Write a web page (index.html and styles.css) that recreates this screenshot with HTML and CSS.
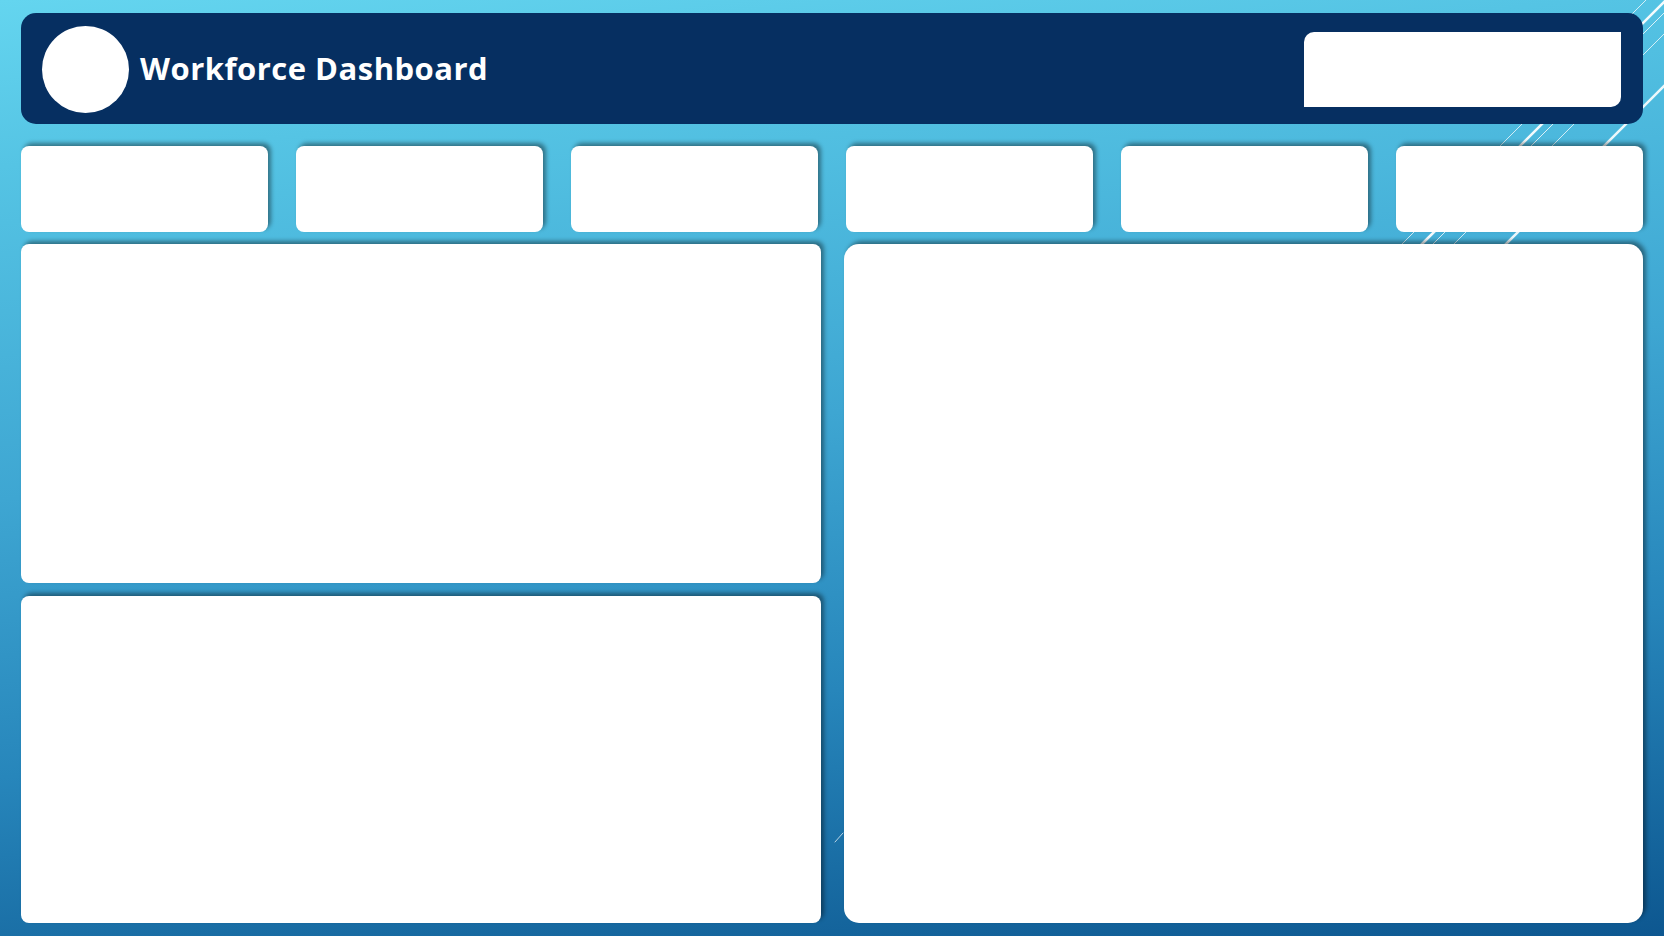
FILE: index.html
```html
<!DOCTYPE html>
<html lang="en">
  <head>
    <meta charset="UTF-8" />
    <meta name="viewport" content="width=device-width,initial-scale=1.0" />
    <title>Workforce Dashboard</title>
    <link rel="stylesheet" href="styles.css">
  </head>
  <body>
    <svg class="streaks" width="1664" height="936" viewBox="0 0 1664 936">
      <g stroke="#ffffff" stroke-linecap="round">
        <line x1="1646" y1="0" x2="1396" y2="250" stroke-width="1" opacity="0.75" />
        <line x1="1666" y1="0" x2="1416" y2="250" stroke-width="2.5" opacity="0.95" />
        <line x1="1677" y1="0" x2="1427" y2="250" stroke-width="1" opacity="0.8" />
        <line x1="1698" y1="0" x2="1448" y2="250" stroke-width="1" opacity="0.75" />
        <line x1="1750" y1="0" x2="1500" y2="250" stroke-width="2.5" opacity="0.9" />
        <line x1="835" y1="842" x2="843" y2="833" stroke-width="1" opacity="0.7" />
      </g>
    </svg>

    <div class="dashboard">
      <header class="topbar">
        <div class="logo"></div>
        <h1 class="title">Workforce Dashboard</h1>
        <div class="slicer"></div>
      </header>

      <section class="kpis">
        <div class="kpi"></div>
        <div class="kpi"></div>
        <div class="kpi"></div>
        <div class="kpi"></div>
        <div class="kpi"></div>
        <div class="kpi"></div>
      </section>

      <section class="main">
        <div class="left-col">
          <div class="panel panel-top"></div>
          <div class="panel panel-bottom"></div>
        </div>
        <div class="panel panel-big"></div>
      </section>
    </div>
  </body>
</html>
```

FILE: styles.css
```css
* {
  padding: 0;
  margin: 0;
  box-sizing: border-box;
  font-family: 'Open Sans', 'Liberation Sans', sans-serif;
}
body {
  width: 1664px;
  height: 936px;
  overflow: hidden;
  position: relative;
  background: linear-gradient(174deg, #64d5ef 0%, #55c4e4 15%, #3ea6d2 45%, #2786bb 70%, #0d5790 100%);
}
.streaks {
  position: absolute;
  top: 0;
  left: 0;
  pointer-events: none;
}
.dashboard {
  position: relative;
  height: 936px;
  padding: 13px 21px;
  display: flex;
  flex-direction: column;
}
.topbar {
  height: 111px;
  flex-shrink: 0;
  background-color: #062f61;
  border-radius: 15px;
  display: flex;
  align-items: center;
  padding: 0 22px 0 21px;
  margin-bottom: 22px;
}
.logo {
  width: 87px;
  height: 87px;
  flex-shrink: 0;
  border-radius: 50%;
  background-color: #ffffff;
  margin-top: 1px;
}
.title {
  color: #ffffff;
  font-size: 31px;
  font-weight: 700;
  letter-spacing: 0.5px;
  margin-left: 11px;
  margin-top: -2px;
}
.slicer {
  margin-left: auto;
  width: 317px;
  height: 75px;
  margin-top: 1px;
  background-color: #ffffff;
  border-radius: 10px 0 10px 0;
}
.kpis {
  height: 86px;
  flex-shrink: 0;
  display: grid;
  grid-template-columns: repeat(6, 1fr);
  gap: 28px;
  margin-bottom: 12px;
}
.kpi {
  background-color: #ffffff;
  border-radius: 8px;
  box-shadow: 3px -3px 4px rgba(0, 0, 0, 0.4);
}
.main {
  flex: 1;
  display: grid;
  grid-template-columns: 1fr 1fr;
  gap: 23px;
}
.left-col {
  display: flex;
  flex-direction: column;
  gap: 13px;
}
.panel {
  background-color: #ffffff;
  border-radius: 8px;
  box-shadow: 3px -3px 4px rgba(0, 0, 0, 0.4);
}
.panel-top {
  height: 339px;
}
.panel-bottom {
  flex: 1;
}
.panel-big {
  border-radius: 15px;
}
```
